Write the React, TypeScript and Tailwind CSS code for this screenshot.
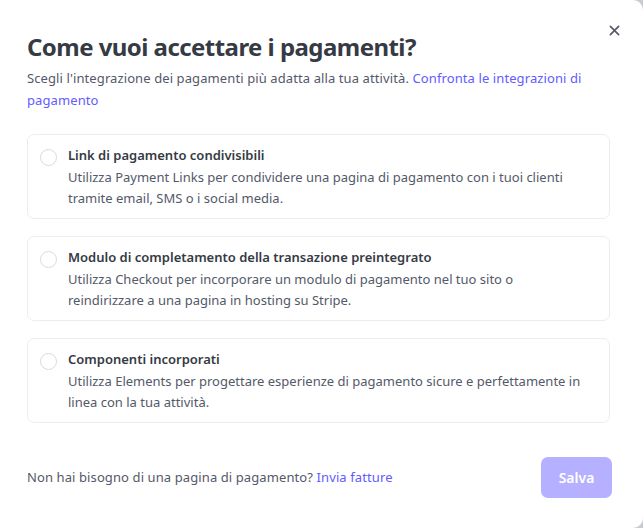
import React from "react";

const options = [
  {
    title: "Link di pagamento condivisibili",
    desc: "Utilizza Payment Links per condividere una pagina di pagamento con i tuoi clienti tramite email, SMS o i social media.",
  },
  {
    title: "Modulo di completamento della transazione preintegrato",
    desc: "Utilizza Checkout per incorporare un modulo di pagamento nel tuo sito o reindirizzare a una pagina in hosting su Stripe.",
  },
  {
    title: "Componenti incorporati",
    desc: "Utilizza Elements per progettare esperienze di pagamento sicure e perfettamente in linea con la tua attività.",
  },
];

export default function App() {
  return (
    <div className="w-[643px] h-[528px] bg-[#c9cbd2] overflow-hidden" style={{ fontFamily: '"Noto Sans", "Open Sans", sans-serif' }}>
      <div className="w-[643px] h-[528px] bg-white rounded-tr-[10px] rounded-br-[10px] flex flex-col px-[27px] pt-[32px]">
        <div className="flex justify-between items-start">
          <h1 className="text-[24px] leading-[30px] font-bold text-[#353a44] tracking-[-0.55px]">Come vuoi accettare i pagamenti?</h1>
          <button className="mt-[-10px] mr-[-6px] text-[#545969] w-[16px] h-[16px] flex items-center justify-center">
            <svg width="11" height="11" viewBox="0 0 12 12" fill="none" stroke="currentColor" strokeWidth="1.8" strokeLinecap="round">
              <path d="M1.5 1.5L10.5 10.5M10.5 1.5L1.5 10.5" />
            </svg>
          </button>
        </div>
        <p className="mt-[5px] text-[13px] leading-[22px] text-[#545969] pr-[10px] tracking-[0.1px]">
          Scegli l'integrazione dei pagamenti più adatta alla tua attività.{" "}
          <span className="text-[#635bff]">Confronta le integrazioni di pagamento</span>
        </p>
        <div className="mt-[23px] flex flex-col gap-[17px]">
          {options.map((o) => (
            <div key={o.title} className="w-[583px] h-[85px] border border-[#ebeef1] rounded-[7px] flex gap-[11px] pl-[12px] pr-[20px] pt-[10px]">
              <div className="mt-[4px] w-[17px] h-[17px] rounded-full border border-[#d5dbe1] shrink-0" />
              <div className="flex flex-col">
                <div className="text-[13px] leading-[21px] font-semibold text-[#353a44]">{o.title}</div>
                <div className="mt-[1px] text-[13px] leading-[21px] text-[#545969]">{o.desc}</div>
              </div>
            </div>
          ))}
        </div>
        <div className="mt-[34px] flex items-center justify-between w-[585px]">
          <div className="text-[13px] text-[#545969] tracking-[0.1px]">
            Non hai bisogno di una pagina di pagamento? <span className="text-[#635bff]">Invia fatture</span>
          </div>
          <button className="w-[71px] h-[41px] rounded-[7px] bg-[#b5b0ff] text-white text-[14px] font-semibold">Salva</button>
        </div>
      </div>
    </div>
  );
}
